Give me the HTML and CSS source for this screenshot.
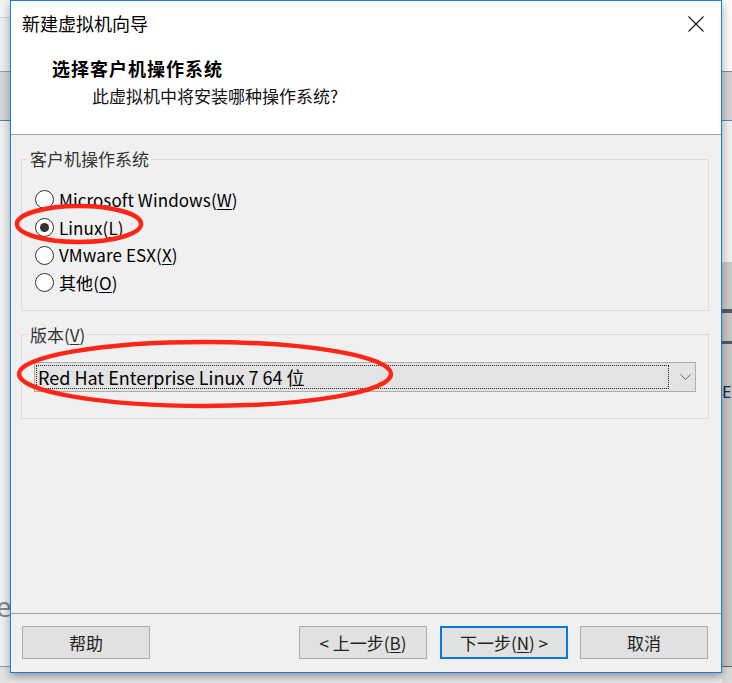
FILE: index.html
```html
<!DOCTYPE html>
<html lang="zh-CN">
<head>
<meta charset="utf-8">
<title>新建虚拟机向导</title>
<link rel="stylesheet" href="styles.css">
</head>
<body>
<div class="screen">
  <div class="side side-left"><span class="peek-left">e</span></div>
  <div class="center-col">
    <div class="dialog">
      <div class="titlebar">
        <span class="title">新建虚拟机向导</span>
        <svg class="close" width="16" height="16" viewBox="0 0 16 16"><path d="M0.5 0.5 L15.5 15.5 M15.5 0.5 L0.5 15.5" stroke="#111" stroke-width="1.1" fill="none"/></svg>
      </div>
      <div class="header">
        <div class="heading">选择客户机操作系统</div>
        <div class="subheading">此虚拟机中将安装哪种操作系统?</div>
      </div>
      <div class="body">
        <fieldset class="group group-os">
          <legend class="legend">客户机操作系统</legend>
          <div class="radio-list">
            <div class="radio-row"><span class="radio"></span><span class="radio-label">Microsoft Windows(<u>W</u>)</span></div>
            <div class="radio-row"><span class="radio checked"></span><span class="radio-label">Linux(<u>L</u>)</span></div>
            <div class="radio-row"><span class="radio"></span><span class="radio-label">VMware ESX(<u>X</u>)</span></div>
            <div class="radio-row"><span class="radio"></span><span class="radio-label">其他(<u>O</u>)</span></div>
          </div>
        </fieldset>
        <fieldset class="group group-ver">
          <legend class="legend">版本(<u>V</u>)</legend>
          <div class="select">
            <div class="select-focus"><span class="select-text">Red Hat Enterprise Linux 7 64 位</span></div>
            <svg class="chevron" width="11" height="6" viewBox="0 0 11 6"><path d="M0.5 0.5 L5.5 5.5 L10.5 0.5" stroke="#666" stroke-width="1" fill="none"/></svg>
          </div>
        </fieldset>
      </div>
      <div class="footer">
        <button class="btn">帮助</button>
        <div class="btn-group">
          <button class="btn">&lt; 上一步(<u>B</u>)</button>
          <button class="btn btn-default">下一步(<u>N</u>) &gt;</button>
          <button class="btn">取消</button>
        </div>
      </div>
    </div>
    <div class="below"></div>
  </div>
  <div class="side side-right"><span class="peek-right">E|</span></div>
  <svg class="marks" width="732" height="683" viewBox="0 0 732 683">
    <ellipse cx="79" cy="224" rx="62" ry="18" fill="none" stroke="#ff2618" stroke-width="4.5"/>
    <ellipse cx="205" cy="374" rx="186" ry="32" fill="none" stroke="#ff2618" stroke-width="4.5"/>
  </svg>
</div>
</body>
</html>
```

FILE: styles.css
```css
* { box-sizing: border-box; }
html, body { margin: 0; padding: 0; }
body {
  width: 732px;
  height: 683px;
  overflow: hidden;
  font-family: "Noto Sans CJK SC", "Noto Sans", sans-serif;
  color: #000;
}
.screen {
  position: relative;
  display: flex;
  width: 732px;
  height: 683px;
  background: #e6e6e6;
}
.side {
  width: 10px;
  height: 683px;
  overflow: hidden;
  display: flex;
  flex-direction: column;
}
.side-left {
  background: linear-gradient(to bottom,
    #f6f6f6 0 17px, #d6d6d6 17px 18px, #f0f0f0 18px 71px, #9c9c9c 71px 72px,
    #d7d7d7 72px 120px, #5d7e9e 120px 121px, #f2f2f2 121px 666px,
    #8d9aa6 666px 667px, #e4e4e4 667px);
  justify-content: flex-start;
}
.peek-left {
  margin-top: 591px;
  margin-left: -4px;
  font-family: "Noto Sans", sans-serif;
  font-size: 28px;
  line-height: 30px;
  color: #8a8a8a;
}
.side-right {
  background: linear-gradient(to bottom,
    #fdfdfd 0 71px, #8c8c8c 71px 72px, #d3d3d3 72px 120px, #5c86b4 120px 121px,
    #f2f2f2 121px 262px, #cbcbcb 262px 309px, #4f5d68 309px 313px,
    #c9c9c9 313px 341px, #4f5d68 341px 344px, #c7c7c7 344px 666px,
    #5b6b79 666px 667px, #dadada 667px);
}
.peek-right {
  margin-top: 381px;
  margin-left: 0px;
  font-family: "Noto Sans", sans-serif;
  font-size: 17px;
  line-height: 22px;
  color: #1d2a5a;
}
.center-col {
  width: 712px;
  display: flex;
  flex-direction: column;
}
.below {
  flex: 1;
  background: linear-gradient(to bottom, #d8d8d8, #ececec);
}
.dialog {
  height: 673px;
  border: 1px solid #1a7fd9;
  background: #f0f0f0;
  display: flex;
  flex-direction: column;
  box-shadow: 0 3px 10px rgba(0,0,0,0.35);
  position: relative;
  z-index: 1;
}
.titlebar {
  height: 44px;
  background: #fff;
  display: flex;
  align-items: center;
  justify-content: space-between;
  padding: 0 17px 0 11px;
}
.title {
  font-size: 18px;
  line-height: 24px;
}
.close { display: block; margin-top: 1px; }
.header {
  height: 90px;
  background: #fff;
  border-bottom: 1px solid #a0a0a0;
  padding: 11px 0 0 41px;
}
.heading {
  font-size: 18px;
  font-weight: bold;
  line-height: 24px;
  letter-spacing: 1px;
}
.subheading {
  margin-top: 4px;
  margin-left: 40px;
  font-size: 17px;
  line-height: 24px;
  color: #111;
}
.body {
  flex: 1;
  padding: 0 12px 0 10px;
  display: flex;
  flex-direction: column;
}
.group {
  margin: 12px 0 0 0;
  border: 1px solid #dcdcdc;
  padding: 0 12px;
  min-width: 0;
}
.legend {
  padding: 0 2px;
  margin-left: -6px;
  font-size: 17px;
  line-height: 24px;
  color: #333;
}
.radio-list {
  padding: 15px 0 13px 1px;
  display: flex;
  flex-direction: column;
}
.radio-row {
  height: 27.7px;
  display: flex;
  align-items: center;
  gap: 5px;
}
.radio {
  width: 19px;
  height: 19px;
  border: 1px solid #333;
  border-radius: 50%;
  background: #fff;
  display: flex;
  align-items: center;
  justify-content: center;
}
.radio.checked::after {
  content: "";
  width: 9px;
  height: 9px;
  border-radius: 50%;
  background: #333;
}
.radio-label {
  font-size: 17px;
  line-height: 22px;
  letter-spacing: 0.1px;
}
u { text-decoration-thickness: 1px; text-underline-offset: 2px; }
.group-ver { padding-bottom: 26px; }
.select {
  margin-top: 15px;
  height: 30px;
  border: 1px solid #adadad;
  background: #e3e3e3;
  display: flex;
  align-items: center;
  padding: 2px 0 2px 1px;
}
.select-focus {
  width: 633px;
  height: 24px;
  border: 1px dotted #222;
  display: flex;
  align-items: center;
  padding-left: 1px;
}
.select-text {
  font-size: 18px;
  line-height: 22px;
}
.chevron { margin-left: 11px; display: block; }
.footer {
  height: 59px;
  border-top: 1px solid #a0a0a0;
  display: flex;
  justify-content: space-between;
  padding: 12px 13px 0 11px;
}
.btn-group { display: flex; gap: 13px; }
.btn {
  width: 128px;
  height: 33px;
  border: 1px solid #adadad;
  background: #e1e1e1;
  font-family: "Noto Sans CJK SC", "Noto Sans", sans-serif;
  font-size: 17px;
  line-height: 22px;
  color: #222;
  padding: 0;
  margin: 0;
}
.btn-default {
  border: 2px solid #0a78d6;
}
.btn-group .btn:last-child { margin-left: -1px; }
.marks {
  position: absolute;
  left: 0;
  top: 0;
  z-index: 2;
  pointer-events: none;
}
```
